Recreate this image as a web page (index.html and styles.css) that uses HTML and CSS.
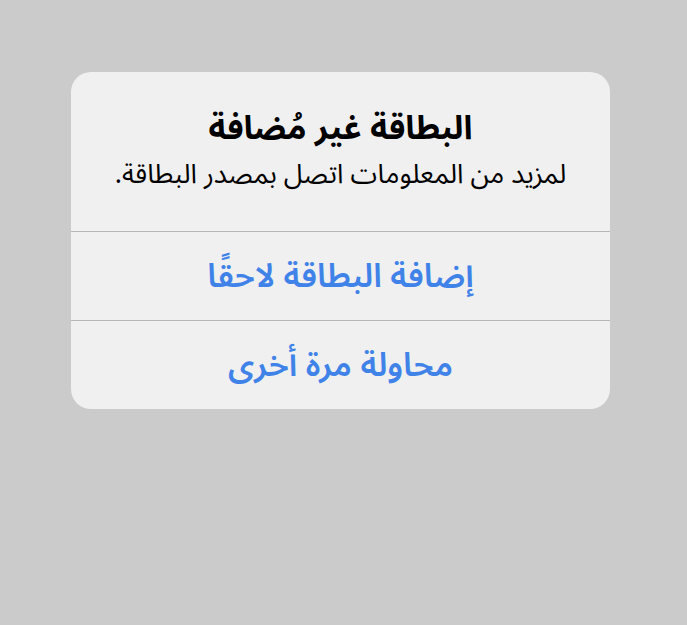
FILE: index.html
```html
<!DOCTYPE html>
<html lang="ar" dir="rtl">
<head>
<meta charset="utf-8">
<link rel="stylesheet" href="styles.css">
</head>
<body>
<div class="stage">
  <div class="alert">
    <div class="alert-header">
      <div class="alert-title">البطاقة غير مُضافة</div>
      <div class="alert-message">لمزيد من المعلومات اتصل بمصدر البطاقة.</div>
    </div>
    <div class="alert-action">إضافة البطاقة لاحقًا</div>
    <div class="alert-action">محاولة مرة أخرى</div>
  </div>
</div>
</body>
</html>
```
FILE: styles.css
```css
html, body {
  margin: 0;
  padding: 0;
  background: #cbcbcb;
}
body {
  width: 687px;
  height: 625px;
  font-family: "Noto Sans Arabic", "DejaVu Sans", sans-serif;
}
.stage {
  direction: ltr;
  padding: 72px 0 0 71px;
}
.alert {
  direction: rtl;
  width: 539px;
  background: #f0f0f0;
  border-radius: 20px;
  overflow: hidden;
}
.alert-header {
  height: 160px;
  box-sizing: border-box;
  padding-top: 36px;
  text-align: center;
  border-bottom: 1px solid #b6b6b6;
}
.alert-title {
  font-size: 33px;
  font-weight: 700;
  color: #000;
  line-height: 42px;
}
.alert-message {
  font-size: 27px;
  color: #000;
  line-height: 36px;
  margin-top: 7px;
}
.alert-action {
  height: 88px;
  display: flex;
  align-items: center;
  justify-content: center;
  font-size: 33px;
  font-weight: 600;
  color: #3f82e8;
}
.alert-action + .alert-action {
  border-top: 1px solid #b6b6b6;
}
```
